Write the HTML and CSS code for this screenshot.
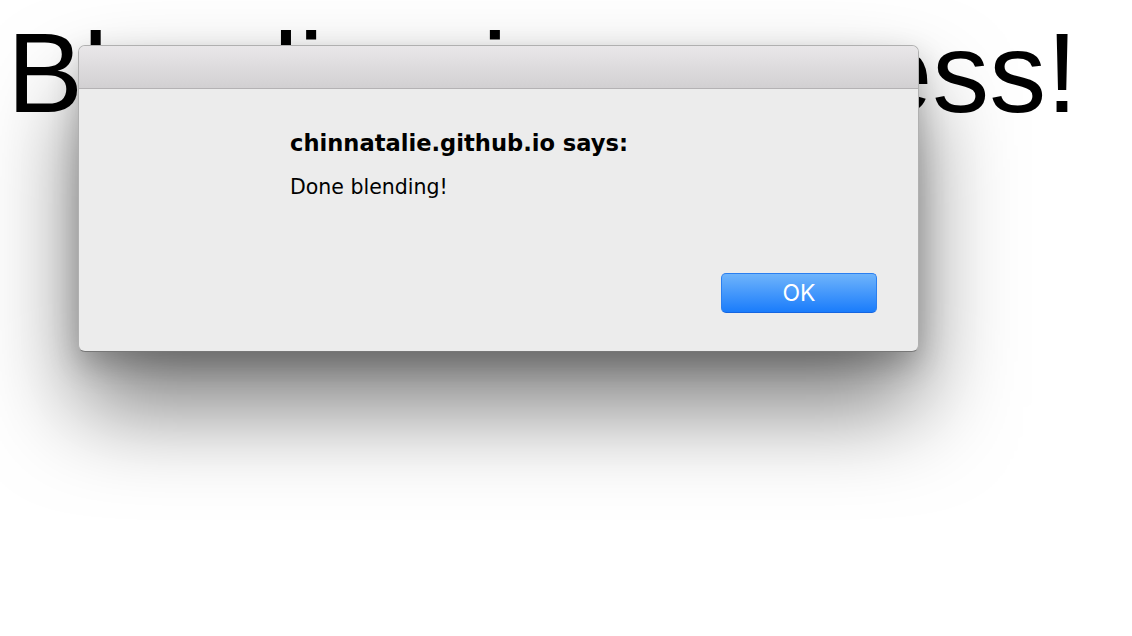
FILE: index.html
```html
<!DOCTYPE html>
<html>
<head>
<meta charset="utf-8">
<link rel="stylesheet" href="styles.css">
</head>
<body>
<h1 class="page-title">Blending in progress!</h1>
<div class="alert">
  <div class="alert-titlebar"></div>
  <div class="alert-body">
    <div class="alert-heading">chinnatalie.github.io says:</div>
    <div class="alert-message">Done blending!</div>
    <div class="alert-actions">
      <button class="alert-ok">OK</button>
    </div>
  </div>
</div>
</body>
</html>
```
FILE: styles.css
```css
html, body {
  margin: 0;
  padding: 0;
  background: #ffffff;
  width: 1132px;
  height: 636px;
  overflow: hidden;
}
.page-title {
  margin: 0;
  padding: 8px 0 0 7px;
  font-family: "Liberation Sans", Arial, sans-serif;
  font-weight: normal;
  font-size: 114px;
  line-height: 130px;
  color: #000;
  white-space: nowrap;
}
.alert {
  position: absolute;
  left: 78px;
  top: 45px;
  width: 841px;
  height: 307px;
  box-sizing: border-box;
  border: 1px solid #b0b0b0;
  border-bottom-color: #777777;
  border-radius: 7px;
  background: #ececec;
  overflow: hidden;
  display: flex;
  flex-direction: column;
  box-shadow: 0 55px 95px rgba(0,0,0,0.52), 0 12px 30px rgba(0,0,0,0.22);
}
.alert-titlebar {
  height: 42px;
  flex: none;
  background: linear-gradient(#e9e7e9, #d2d0d2);
  border-bottom: 1px solid #b4b2b4;
}
.alert-body {
  flex: 1;
  display: flex;
  flex-direction: column;
  padding: 0 41px 38px 211px;
  font-family: "DejaVu Sans", Inter, sans-serif;
  color: #000;
}
.alert-heading {
  margin-top: 41px;
  font-size: 22.6px;
  font-weight: 700;
  line-height: 26px;
}
.alert-message {
  margin-top: 19px;
  font-size: 20.5px;
  line-height: 24px;
}
.alert-actions {
  margin-top: auto;
  display: flex;
  justify-content: flex-end;
}
.alert-ok {
  width: 156px;
  height: 40px;
  box-sizing: border-box;
  border: 1px solid #2a7ff0;
  border-bottom-color: #1565e0;
  border-radius: 5px;
  background: linear-gradient(#6fb4fb, #1a7cfb);
  color: #fff;
  font-family: Inter, "Liberation Sans", sans-serif;
  font-size: 23px;
  line-height: 38px;
  padding: 0;
}
```
